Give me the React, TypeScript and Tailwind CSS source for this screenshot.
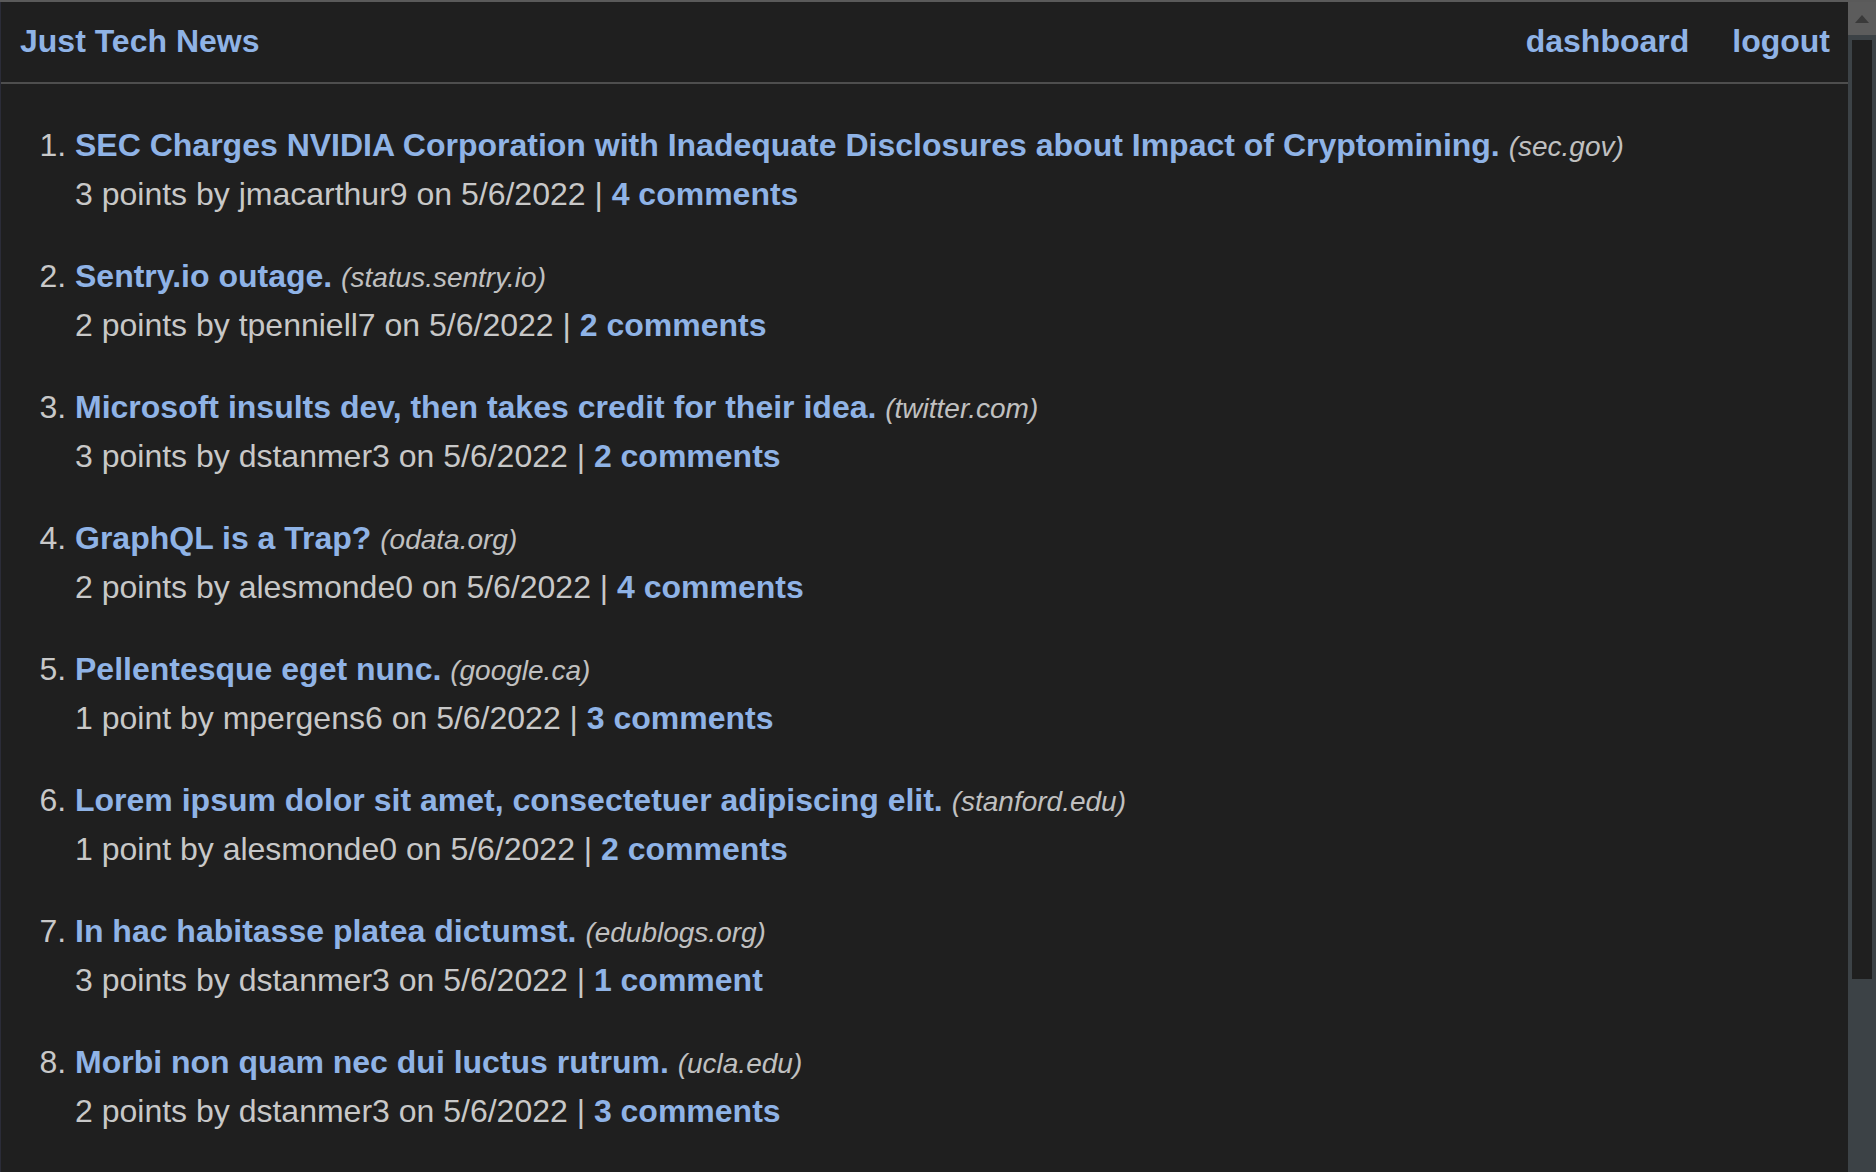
import React from "react";

const posts = [
  { title: "SEC Charges NVIDIA Corporation with Inadequate Disclosures about Impact of Cryptomining.", domain: "sec.gov", points: 3, user: "jmacarthur9", comments: 4 },
  { title: "Sentry.io outage.", domain: "status.sentry.io", points: 2, user: "tpenniell7", comments: 2 },
  { title: "Microsoft insults dev, then takes credit for their idea.", domain: "twitter.com", points: 3, user: "dstanmer3", comments: 2 },
  { title: "GraphQL is a Trap?", domain: "odata.org", points: 2, user: "alesmonde0", comments: 4 },
  { title: "Pellentesque eget nunc.", domain: "google.ca", points: 1, user: "mpergens6", comments: 3 },
  { title: "Lorem ipsum dolor sit amet, consectetuer adipiscing elit.", domain: "stanford.edu", points: 1, user: "alesmonde0", comments: 2 },
  { title: "In hac habitasse platea dictumst.", domain: "edublogs.org", points: 3, user: "dstanmer3", comments: 1 },
  { title: "Morbi non quam nec dui luctus rutrum.", domain: "ucla.edu", points: 2, user: "dstanmer3", comments: 3 },
];

export default function App() {
  return (
    <div className="h-screen flex flex-col overflow-hidden border-t-2 border-[#5a5a5a] bg-[#1f1f1f] font-['Liberation_Sans',Arial,sans-serif] text-[32px] text-[#c8c8c8]">
      <div className="flex flex-1 min-h-0">
        {/* page */}
        <main className="flex-1 border-l border-[#2b2c38]">
          <header className="flex items-center justify-between border-b-2 border-[#4e4e4e] pl-[19px] pr-[18px] pt-[21px] pb-[22px] leading-[37px]">
            <a href="#" className="font-bold text-[#8fb3e6]">
              Just Tech News
            </a>
            <nav className="flex items-center gap-[43px] font-bold text-[#8fb3e6]">
              <a href="#">dashboard</a>
              <a href="#">logout</a>
            </nav>
          </header>

          <ol className="list-decimal pl-[74px] pt-[43px]">
            {posts.map((p) => (
              <li key={p.title} className="mb-[45px] leading-[37px]">
                <div className="h-[37px]">
                  <a href="#" className="font-bold text-[#8fb3e6]">
                    {p.title}
                  </a>{" "}
                  <span className="text-[28px] italic text-[#c0c0c0]">({p.domain})</span>
                </div>
                <div className="mt-[12px]">
                  {p.points} {p.points === 1 ? "point" : "points"} by {p.user} on 5/6/2022 |{" "}
                  <a href="#" className="font-bold text-[#8fb3e6]">
                    {p.comments} {p.comments === 1 ? "comment" : "comments"}
                  </a>
                </div>
              </li>
            ))}
          </ol>
        </main>

        {/* fake scrollbar */}
        <aside className="w-[28px] flex flex-col bg-[#3c4246]">
          <div className="h-[33px] bg-[#5c5c5c] flex items-center justify-center">
            <svg width="14" height="8" viewBox="0 0 14 8" aria-hidden="true">
              <path d="M7 0L14 8H0z" fill="#3a3a3a" />
            </svg>
          </div>
          <div className="flex-1 pt-[5px] pb-[193px] pl-[4px] pr-[4px]">
            <div className="h-full bg-[#1f1f1f]" />
          </div>
        </aside>
      </div>
    </div>
  );
}
